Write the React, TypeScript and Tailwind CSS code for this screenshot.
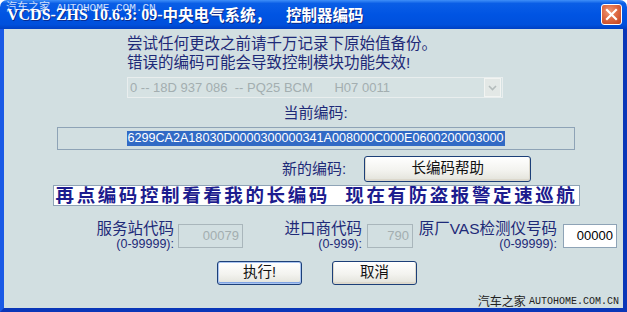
import React from 'react';

const cjk = "font-['Liberation_Sans','Noto_Sans_CJK_SC',sans-serif]";

const XpButton: React.FC<{ label: string; className?: string; isDefault?: boolean }> = ({ label, className = '', isDefault }) => (
  <button
    className={`flex items-center justify-center rounded-[3px] border border-[#1c3f78] bg-[linear-gradient(to_bottom,#ffffff_0%,#f3f3ef_55%,#e2e2da_100%)] text-[14.5px] text-[#111] ${
      isDefault ? 'shadow-[inset_0_0_0_1px_#a9c4f0,inset_0_-1px_0_1px_#7fa4e4]' : 'shadow-[inset_0_-1px_0_1px_#dcd8cc]'
    } ${className}`}
  >
    {label}
  </button>
);

const FieldLabel: React.FC<{ title: string; range: string; width: string }> = ({ title, range, width }) => (
  <div className={`flex flex-col items-end ${width} text-[#1e2a78]`}>
    <span className="text-[15.5px] leading-[17px] whitespace-nowrap">{title}</span>
    <span className="text-[12.5px] leading-[14px] whitespace-nowrap">{range}</span>
  </div>
);

const App: React.FC = () => {
  return (
    <div className={`w-[627px] h-[312px] flex flex-col overflow-hidden ${cjk}`}>
      {/* title bar */}
      <div className="relative h-[29px] flex items-center pl-[7px] pr-[5px] rounded-t-[7px] bg-[linear-gradient(to_bottom,#3f8ff8_0%,#0a5ee6_12%,#0054e3_50%,#0050dc_85%,#0040c4_100%)]">
        <div className="flex items-center text-white font-bold whitespace-pre [text-shadow:1px_1px_0_#0a2a8a]">
          <span className="text-[16px] font-['Liberation_Serif',serif]">VCDS-ZHS 10.6.3: 09-</span>
          <span className="text-[15.5px] font-['Noto_Sans_CJK_SC',sans-serif]">中央电气系统，</span>
          <span className="ml-[15px] text-[15.5px] font-['Noto_Sans_CJK_SC',sans-serif]">控制器编码</span>
        </div>
        <span className="absolute left-[6px] top-[2px] text-[11px] leading-[12px] text-white/80 whitespace-pre font-['Liberation_Mono','Noto_Sans_CJK_SC',monospace]">
          汽车之家 AUTOHOME.COM.CN
        </span>
        <div className="ml-auto mr-[0px] w-[21px] h-[21px] rounded-[3px] border border-white bg-[radial-gradient(circle_at_40%_35%,#f09a78_0%,#de6a44_45%,#c2401c_100%)] flex items-center justify-center">
          <svg width="13" height="13" viewBox="0 0 13 13">
            <path d="M2 2 L11 11 M11 2 L2 11" stroke="white" strokeWidth="2.2" strokeLinecap="square" />
          </svg>
        </div>
      </div>

      {/* body */}
      <div className="flex-1 flex flex-col bg-[#d2dfe1] border-l-4 border-l-[#1a5ae6] border-r-4 border-r-[#0a36b8] border-b-4 border-b-[#0a36b8] text-[#1e2a78]">
        <div className="pt-[5px] pl-[123px] text-[15.5px] leading-[19px]">
          <div>尝试任何更改之前请千万记录下原始值备份。</div>
          <div>错误的编码可能会导致控制模块功能失效!</div>
        </div>

        {/* combo */}
        <div className="mt-[5px] ml-[123px] w-[376px] h-[21px] flex items-center border border-[#e9eeee] bg-[#d6e2e3]">
          <span className="flex-1 pl-[2px] text-[13px] text-[#a3aeb0] whitespace-pre">
            0 -- 18D 937 086  -- PQ25 BCM      H07 0011
          </span>
          <div className="w-[17px] h-[19px] mr-[1px] flex items-center justify-center bg-[#e3e8e6] border border-[#f2f4f2]">
            <svg width="9" height="6" viewBox="0 0 9 6">
              <path d="M1 1 L4.5 4.5 L8 1" stroke="#b4bcbc" strokeWidth="1.6" fill="none" />
            </svg>
          </div>
        </div>

        <div className="mt-[5px] text-center text-[15px] leading-[19px] pl-[4px]">当前编码:</div>

        {/* current code */}
        <div className="mt-[5px] ml-[53px] w-[518px] h-[23px] flex items-center justify-center border border-[#8ea3b6]">
          <span className="bg-[#316ac5] text-white text-[12.6px] leading-[15px] pr-[1px]">
            6299CA2A18030D0000300000341A008000C000E0600200003000
          </span>
        </div>

        {/* new code */}
        <div className="mt-[6px] pl-[278px] flex items-center">
          <span className="text-[15px] whitespace-nowrap">新的编码:</span>
          <XpButton label="长编码帮助" className="ml-[18px] w-[167px] h-[26px]" />
        </div>

        {/* banner */}
        <div className="mt-[3px] ml-[49px] w-[527px] h-[21px] flex items-center justify-center bg-white border border-[#8ea3b6]">
          <span className="font-bold text-[18.5px] leading-[20px] tracking-[2.6px] text-[#1c1c8e] whitespace-pre">
            再点编码控制看看我的长编码  现在有防盗报警定速巡航
          </span>
        </div>

        {/* fields */}
        <div className="mt-[14px] pl-[90px] flex items-center">
          <FieldLabel title="服务站代码" range="(0-99999):" width="w-[80px]" />
          <div className="ml-[4px] w-[65px] h-[24px] flex items-center justify-end pr-[3px] border border-[#a9b6bb] text-[13px] text-[#a3aeb0]">
            00079
          </div>
          <div className="ml-[39px]">
            <FieldLabel title="进口商代码" range="(0-999):" width="w-[80px]" />
          </div>
          <div className="ml-[5px] w-[46px] h-[24px] flex items-center justify-end pr-[3px] border border-[#a9b6bb] text-[13px] text-[#a3aeb0]">
            790
          </div>
          <div className="ml-[4px]">
            <FieldLabel title="原厂VAS检测仪号码" range="(0-99999):" width="w-[140px]" />
          </div>
          <div className="ml-[6px] w-[54px] h-[24px] flex items-center justify-end pr-[3px] border border-[#8ea3b6] bg-white text-[13px] text-black">
            00000
          </div>
        </div>

        {/* actions */}
        <div className="mt-[10px] pl-[213px] flex items-center gap-[30px]">
          <XpButton label="执行!" className="w-[85px] h-[24px]" isDefault />
          <XpButton label="取消" className="w-[85px] h-[24px]" />
        </div>

        <div className="mt-auto pr-[4px] flex justify-end items-end text-[#222] leading-[12px] whitespace-pre">
          <span className="text-[12px]">汽车之家 </span>
          <span className="text-[10px] font-['Liberation_Mono',monospace]">AUTOHOME.COM.CN</span>
        </div>
      </div>
    </div>
  );
};

export default App;
